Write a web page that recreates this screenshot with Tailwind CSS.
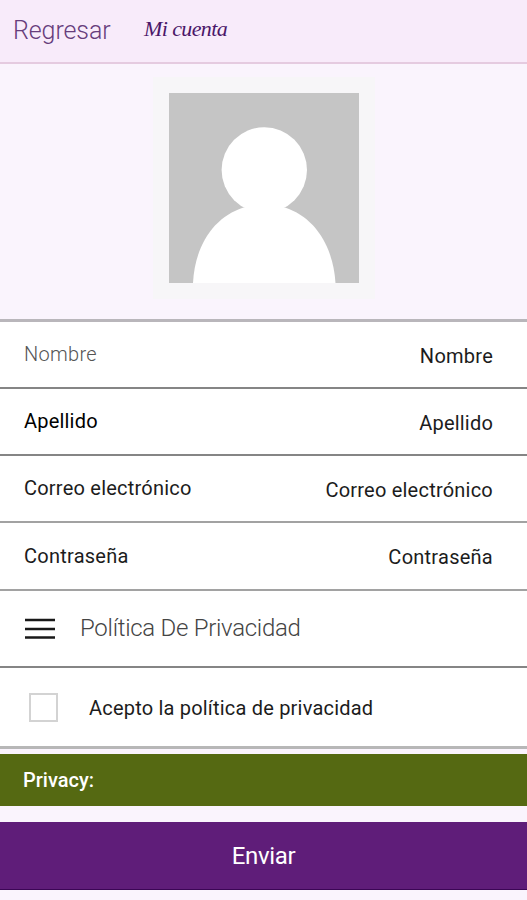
<!DOCTYPE html>
<html lang="es">
<head>
  <meta charset="UTF-8" />
  <meta name="viewport" content="width=device-width, initial-scale=1.0" />
  <title>Mi cuenta</title>
  <script src="https://cdn.jsdelivr.net/npm/@tailwindcss/browser@4"></script>
</head>
<body class="bg-[#faf4fd] h-screen flex flex-col overflow-hidden font-['Roboto',sans-serif] text-[20px] leading-6 text-[#1c1c1c]">

  <!-- CABECERA -->
  <header class="h-16 shrink-0 flex bg-[#f8ebfa] border-b-2 border-[#e5cbe0] pl-[13px] pt-[15px]">
    <a href="#" class="w-[131px] h-8 leading-8 text-[25px] font-light tracking-[-0.1px] text-[#673d7c]">Regresar</a>
    <h1 class="h-7 leading-7 text-[22px] italic tracking-[-0.6px] whitespace-nowrap text-[#4b1769] font-['Liberation_Serif',cursive]">Mi cuenta</h1>
  </header>

  <!-- FOTO DE PERFIL -->
  <div class="h-[255px] shrink-0 flex justify-center pt-[13px]">
    <div class="w-[222px] h-[222px] bg-[#f7f6f8] p-4">
      <svg class="block w-[190px] h-[190px]" viewBox="0 0 190 190">
        <rect width="190" height="190" fill="#c5c5c5" />
        <circle cx="95.3" cy="77" r="42.7" fill="#fff" />
        <path d="M24 190C26 152 45 124 74.500 114.500H116C145 124 164 152 166.500 190Z" fill="#fff" />
      </svg>
    </div>
  </div>

  <!-- DATOS -->
  <form class="shrink-0 bg-white border-t-3 border-[#b9b6bb]">
    <div class="h-[67px] flex justify-between items-center pl-6 pr-[34px] border-b-2 border-[#858585]">
      <label class="font-light tracking-[0.3px] pb-[2px] text-[#555]">Nombre</label>
      <span class="tracking-[0.25px] pt-[2px]">Nombre</span>
    </div>
    <div class="h-[67px] flex justify-between items-center pl-6 pr-[34px] border-b-2 border-[#858585]">
      <label class="tracking-[0.2px] pb-[2px] text-black">Apellido</label>
      <span class="tracking-[0.2px] pt-[2px]">Apellido</span>
    </div>
    <div class="h-[67px] flex justify-between items-center pl-6 pr-[34px] border-b-2 border-[#a2a2a2]">
      <label class="tracking-[0.22px] pb-px">Correo electrónico</label>
      <span class="tracking-[0.22px] pt-[2px]">Correo electrónico</span>
    </div>
    <div class="h-[68px] flex justify-between items-center pl-6 pr-[34px] border-b-2 border-[#a2a2a2]">
      <label class="tracking-[0.25px] pb-px">Contraseña</label>
      <span class="tracking-[0.25px] pt-[2px]">Contraseña</span>
    </div>

    <!-- POLITICA -->
    <div class="h-[77px] flex items-center gap-[25px] pl-[25px] border-b-2 border-[#858585]">
      <svg class="w-[30px] h-[22px]" viewBox="0 0 30 22" stroke="#181818" stroke-width="2.4">
        <path d="M0 2H30M0 11H30M0 19.500H30" />
      </svg>
      <span class="text-[24px] font-light tracking-[-0.28px] pb-[2px] text-[#444]">Política De Privacidad</span>
    </div>
    <label class="h-[81px] flex items-center gap-[31px] pl-[29px] border-b-3 border-[#b7b7b7]">
      <input type="checkbox" class="appearance-none w-[29px] h-[29px] border-2 border-[#d3d3d3] bg-white" />
      <span class="tracking-[0.2px] pt-px">Acepto la política de privacidad</span>
    </label>
  </form>

  <div class="mt-[5px] h-[52px] shrink-0 flex items-center pl-[23px] bg-[#556912] text-white font-medium">Privacy:</div>
  <button class="mt-4 h-[68px] shrink-0 bg-[#5f1d79] border-b border-[#3b0655] text-white text-[24px] tracking-[-0.3px]">Enviar</button>

</body>
</html>
